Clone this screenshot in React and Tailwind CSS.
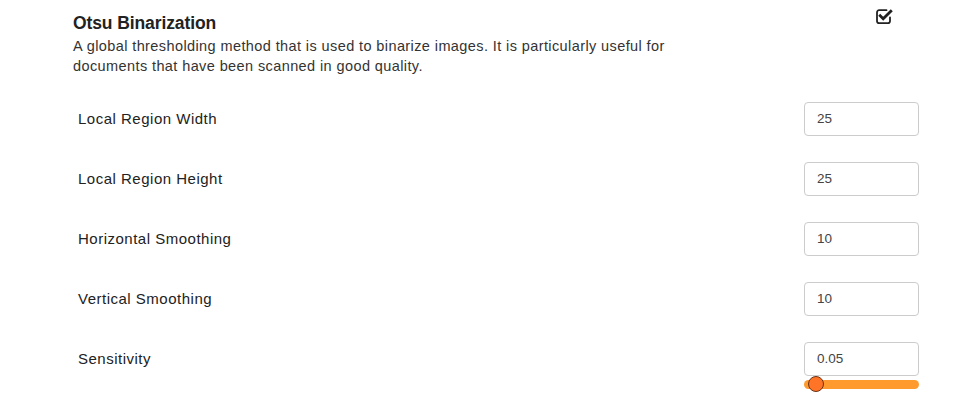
import React from "react";

function CheckSquareIcon() {
  return (
    <svg width="19" height="17" viewBox="0 0 19 17" className="block">
      <path
        d="M11.5 2.2H4.2C2.9 2.2 2 3.1 2 4.4v8.6c0 1.3.9 2.2 2.2 2.2h8.6c1.3 0 2.2-.9 2.2-2.2V9.5"
        fill="none"
        stroke="#222"
        strokeWidth="1.8"
        strokeLinecap="round"
      />
      <path
        d="M5.2 7.8l3 3 7.6-7.6"
        fill="none"
        stroke="#222"
        strokeWidth="2.8"
        strokeLinecap="square"
        strokeLinejoin="miter"
      />
    </svg>
  );
}

const rows = [
  { label: "Local Region Width", value: "25" },
  { label: "Local Region Height", value: "25" },
  { label: "Horizontal Smoothing", value: "10" },
  { label: "Vertical Smoothing", value: "10" },
];

function Input({ value }) {
  return (
    <div className="w-[115px] h-[34px] border border-[#cccccc] rounded-[4px] flex items-center pl-[12px] text-[13.5px] text-[#444] bg-white">
      {value}
    </div>
  );
}

export default function App() {
  return (
    <div
      className="w-[959px] h-[412px] bg-white pl-[73px] pr-[40px] pt-[11px] text-[#222]"
      style={{ fontFamily: '"Liberation Sans", Arial, sans-serif' }}
    >
      <div className="flex justify-between items-start">
        <div className="text-[17.5px] leading-[24px] font-bold text-[#222] tracking-[-0.1px]">
          Otsu Binarization
        </div>
        <div className="mr-[25px] mt-[-3px]">
          <CheckSquareIcon />
        </div>
      </div>
      <div className="text-[14.5px] leading-[20px] tracking-[0.4px] text-[#333] max-w-[620px] mt-[1px]">
        A global thresholding method that is used to binarize images. It is
        particularly useful for documents that have been scanned in good quality.
      </div>
      <div className="mt-[13px] pl-[5px]">
        {rows.map((r) => (
          <div key={r.label} className="flex items-center justify-between py-[13px]">
            <div className="text-[15px] tracking-[0.5px] text-[#222]">{r.label}</div>
            <Input value={r.value} />
          </div>
        ))}
        <div className="pt-[13px]">
          <div className="flex items-center justify-between">
            <div className="text-[15px] tracking-[0.5px] text-[#222]">Sensitivity</div>
            <Input value="0.05" />
          </div>
          <div className="flex justify-end mt-[4px]">
            <div className="relative w-[115px] h-[9px] rounded-full bg-[#ff9a2e]">
              <div className="absolute left-[4px] top-[-4px] w-[16px] h-[16px] rounded-full bg-[#ff7426] border border-[#6b3317]" />
            </div>
          </div>
        </div>
      </div>
    </div>
  );
}
